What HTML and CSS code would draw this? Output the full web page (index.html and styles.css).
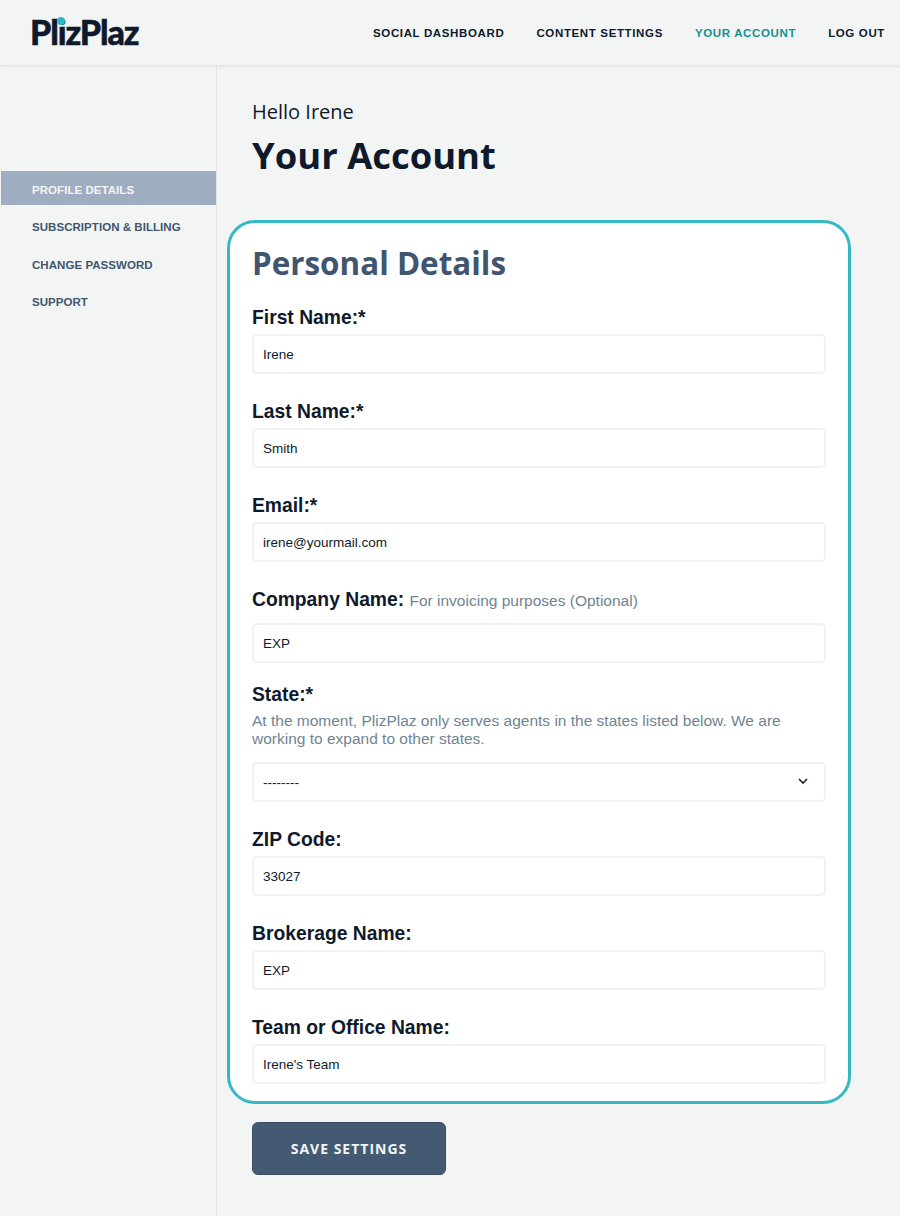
FILE: index.html
```html
<!DOCTYPE html>
<html lang="en">
<head>
    <meta charset="UTF-8">
    <meta name="viewport" content="width=device-width, initial-scale=1.0">
    <title>PlizPlaz - Your Account</title>
    <link rel="stylesheet" href="styles.css">
</head>
<body>
    <header class="topbar">
        <a class="logo" href="#">PlizPlaz<span class="logo-dot"></span></a>
        <nav class="topnav">
            <a href="#">Social Dashboard</a>
            <a href="#">Content Settings</a>
            <a href="#" class="current">Your Account</a>
            <a href="#">Log Out</a>
        </nav>
    </header>

    <div class="page">
        <aside class="sidebar">
            <a href="#" class="active">Profile Details</a>
            <a href="#">Subscription &amp; Billing</a>
            <a href="#">Change Password</a>
            <a href="#">Support</a>
        </aside>

        <main class="content">
            <p class="hello">Hello Irene</p>
            <h1>Your Account</h1>

            <form class="card">
                <h2>Personal Details</h2>

                <div class="field">
                    <label for="first">First Name:*</label>
                    <input type="text" id="first" value="Irene">
                </div>
                <div class="field">
                    <label for="last">Last Name:*</label>
                    <input type="text" id="last" value="Smith">
                </div>
                <div class="field">
                    <label for="email">Email:*</label>
                    <input type="text" id="email" value="irene@yourmail.com">
                </div>
                <div class="field field-company">
                    <label for="company">Company Name: <small>For invoicing purposes (Optional)</small></label>
                    <input type="text" id="company" value="EXP">
                </div>
                <div class="field field-state">
                    <label for="state">State:*</label>
                    <p class="hint">At the moment, PlizPlaz only serves agents in the states listed below. We are working to expand to other states.</p>
                    <div class="select-wrap">
                        <select id="state">
                            <option>--------</option>
                        </select>
                        <svg class="chevron" width="10" height="7" viewBox="0 0 10 7"><path d="M1 1l4 4 4-4" fill="none" stroke="#1a2230" stroke-width="1.6"/></svg>
                    </div>
                </div>
                <div class="field">
                    <label for="zip">ZIP Code:</label>
                    <input type="text" id="zip" value="33027">
                </div>
                <div class="field">
                    <label for="brokerage">Brokerage Name:</label>
                    <input type="text" id="brokerage" value="EXP">
                </div>
                <div class="field">
                    <label for="team">Team or Office Name:</label>
                    <input type="text" id="team" value="Irene's Team">
                </div>
            </form>

            <button type="submit" class="save-btn">Save Settings</button>
        </main>
    </div>
</body>
</html>
```

FILE: styles.css
```css
* {
    margin: 0;
    padding: 0;
    box-sizing: border-box;
}

body {
    font-family: "Liberation Sans", Arial, sans-serif;
    background-color: #f3f5f5;
    color: #0e1a2b;
}

a {
    text-decoration: none;
}

/* Top bar */
.topbar {
    display: flex;
    justify-content: space-between;
    align-items: center;
    height: 65px;
    padding: 0 15px 0 30px;
    box-shadow: 0 1px 3px rgba(40, 60, 80, 0.14);
}

.logo {
    position: relative;
    top: -1px;
    font-family: "Lato", sans-serif;
    font-weight: 900;
    font-size: 34px;
    letter-spacing: -1.1px;
    -webkit-text-stroke: 0.5px #0e1a2b;
    color: #0e1a2b;
}

.logo-dot {
    position: absolute;
    top: 6px;
    left: 27px;
    width: 8px;
    height: 8px;
    border-radius: 50%;
    background-color: #2fb8c6;
}

.topnav {
    display: flex;
    gap: 32px;
}

.topnav a {
    font-size: 11.5px;
    font-weight: bold;
    letter-spacing: 0.64px;
    text-transform: uppercase;
    color: #0e1a2b;
}

.topnav a.current {
    color: #12908f;
}

/* Sidebar + content */
.page {
    display: flex;
    min-height: 1151px;
}

.sidebar {
    width: 217px;
    flex-shrink: 0;
    padding: 106px 0 0 1px;
    border-right: 1px solid #dfe3e5;
    display: flex;
    flex-direction: column;
    gap: 3.6px;
}

.sidebar a {
    display: flex;
    align-items: center;
    height: 34px;
    padding: 3px 0 0 31px;
    font-size: 11.5px;
    font-weight: bold;
    letter-spacing: 0.05px;
    text-transform: uppercase;
    color: #3f566e;
}

.sidebar a.active {
    background-color: #9fadc0;
    color: #f3f5f5;
}

.content {
    padding: 33px 0 0 10px;
}

.hello {
    margin-left: 25px;
    font-family: "Open Sans", sans-serif;
    font-size: 20px;
    line-height: 28px;
}

h1 {
    margin: 4px 0 40px 25px;
    font-family: "Open Sans", sans-serif;
    font-size: 36.4px;
    font-weight: bold;
    line-height: 50px;
}

/* Form card */
.card {
    width: 624px;
    height: 884px;
    padding: 18px 22px 0;
    background: #fff;
    border: 3px solid #34b9c4;
    border-radius: 28px;
}

h2 {
    margin-bottom: 15px;
    font-family: "Open Sans", sans-serif;
    font-size: 31.4px;
    font-weight: bold;
    line-height: 44px;
    color: #3f566e;
}

.field {
    margin-bottom: 20px;
}

.field label {
    display: block;
    height: 34px;
    font-size: 19.3px;
    font-weight: bold;
    line-height: 36px;
}

.field small {
    font-size: 15.5px;
    font-weight: normal;
    color: #6f8494;
}

.field-company label {
    height: 41px;
}

.field-state {
    margin-top: -6px;
}

.hint {
    margin: 1px 0 14px;
    font-size: 15.5px;
    line-height: 18px;
    color: #6f8494;
}

.field input,
.field select {
    display: block;
    width: 100%;
    height: 40px;
    padding: 0 9px;
    font-family: "Liberation Sans", Arial, sans-serif;
    font-size: 13.5px;
    color: #0e1a2b;
    background: #fff;
    border: 2px solid #f0f1f2;
    border-radius: 5px;
    appearance: none;
}

.select-wrap {
    position: relative;
}

.chevron {
    position: absolute;
    top: 16px;
    right: 18px;
}

.save-btn {
    display: block;
    width: 194px;
    height: 53px;
    margin: 18px 0 0 25px;
    font-family: "Open Sans", sans-serif;
    font-size: 14px;
    font-weight: bold;
    letter-spacing: 1px;
    text-transform: uppercase;
    color: #f3f5f5;
    background-color: #445a72;
    border: 1px solid #3a4f66;
    border-radius: 6px;
}
```
